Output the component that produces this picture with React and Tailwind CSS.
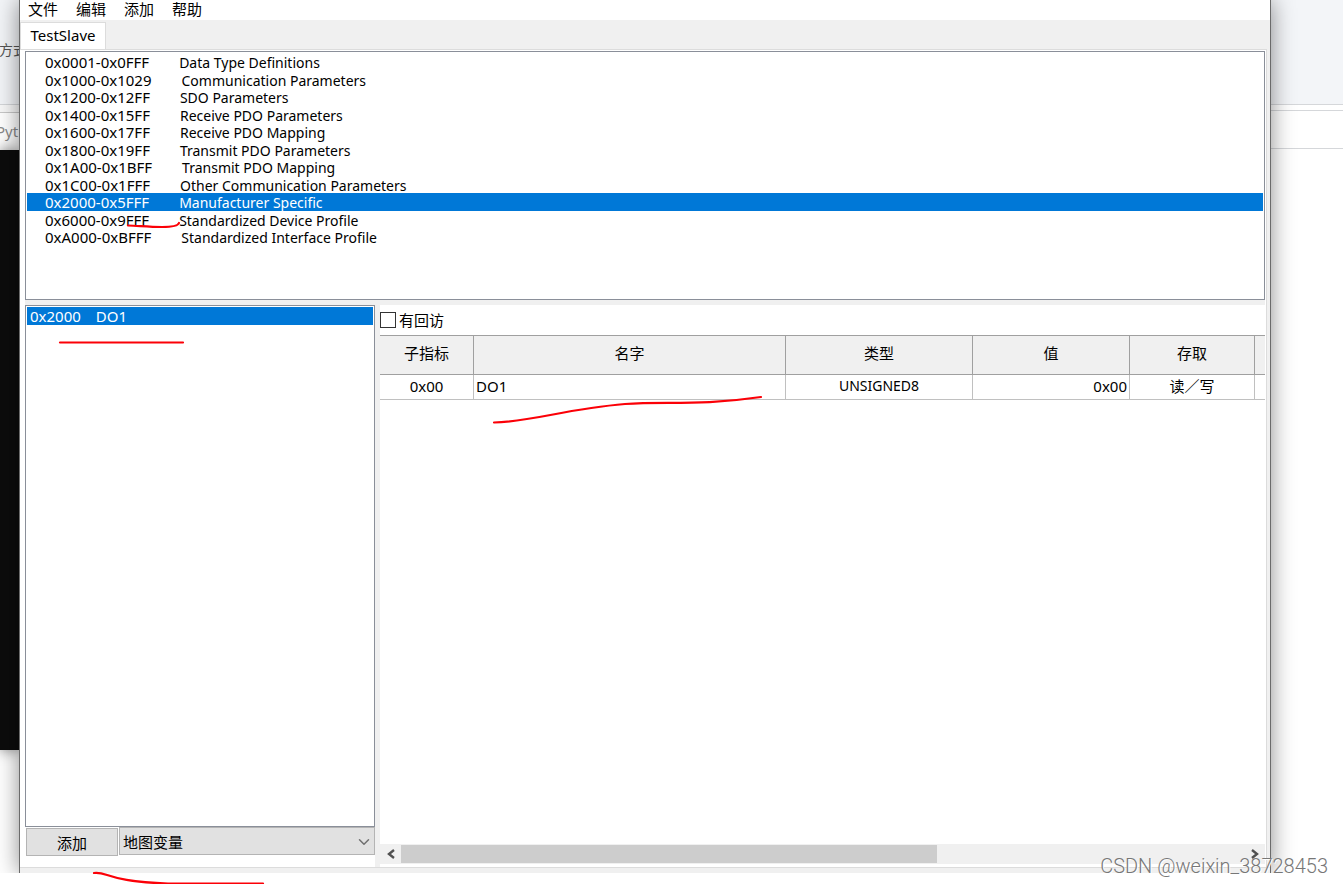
import React, { useState } from "react";
import { ChevronDown } from "lucide-react";

const menus = ["文件", "编辑", "添加", "帮助"];

const ranges = [
  { range: "0x0001-0x0FFF", name: "Data Type Definitions" },
  { range: "0x1000-0x1029", name: "Communication Parameters" },
  { range: "0x1200-0x12FF", name: "SDO Parameters" },
  { range: "0x1400-0x15FF", name: "Receive PDO Parameters" },
  { range: "0x1600-0x17FF", name: "Receive PDO Mapping" },
  { range: "0x1800-0x19FF", name: "Transmit PDO Parameters" },
  { range: "0x1A00-0x1BFF", name: "Transmit PDO Mapping" },
  { range: "0x1C00-0x1FFF", name: "Other Communication Parameters" },
  { range: "0x2000-0x5FFF", name: "Manufacturer Specific" },
  { range: "0x6000-0x9FFF", name: "Standardized Device Profile" },
  { range: "0xA000-0xBFFF", name: "Standardized Interface Profile" },
];

const headers = ["子指标", "名字", "类型", "值", "存取", ""];

// Strip of the windows behind, left of the editor
const LeftBackdrop = () => (
  <div className="flex w-[19px] shrink-0 flex-col overflow-hidden whitespace-nowrap bg-white">
    <div className="h-[105px] border-b border-[#d3d5d8] bg-[#f3f5f8] pt-10 text-[14px] leading-[20px] text-[#555]">
      <span className="-ml-px">方式</span>
    </div>
    <div className="h-2 border-b border-[#c8c8c8] bg-[#f8f8f8]"></div>
    <div className="h-[37px] pt-2 text-[15px] leading-[20px] text-[#8a8a8a]">
      <span className="-ml-1">Pyt</span>
    </div>
    <div className="h-[600px] bg-[#0c0c0c] shadow-[0_0_14px_rgba(0,0,0,0.5)]"></div>
  </div>
);

// Strip of the windows behind, right of the editor
const RightBackdrop = () => (
  <div className="w-[72px] shrink-0 bg-white">
    <div className="h-[105px] border-b border-[#d5d7da] bg-[#f3f5f8]"></div>
    <div className="h-1.5 border-b border-[#d5d7da]"></div>
    <div className="h-[38px] border-b border-[#d5d7da]"></div>
  </div>
);

const RangeList = () => {
  const [selected, setSelected] = useState(8);

  return (
    <div className="h-[249px] shrink-0 border border-[#8a8f99] bg-white p-px">
      <ul className="flex h-[193px] flex-col">
        {ranges.map((item, i) => (
          <li key={item.range} className="flex min-h-0 flex-1">
            <button
              onClick={() => setSelected(i)}
              className={
                i === selected
                  ? "flex w-full items-baseline gap-[30px] bg-[#0078d7] pl-[18px] text-white"
                  : "flex w-full items-baseline gap-[30px] pl-[18px]"
              }
            >
              <span>{item.range}</span>
              <span className="text-[14px]">{item.name}</span>
            </button>
          </li>
        ))}
      </ul>
    </div>
  );
};

const IndexPanel = () => (
  <div className="flex w-[350px] shrink-0 flex-col">
    <ul className="flex-1 border border-[#8a8f99] bg-white p-px">
      <li>
        <button className="flex h-[18px] w-full items-center gap-[15px] bg-[#0078d7] pl-[3px] text-white">
          <span>0x2000</span>
          <span>DO1</span>
        </button>
      </li>
    </ul>
    <div className="flex h-10 items-start gap-px bg-white pl-px">
      <button className="mt-px h-7 w-[92px] border border-[#b4b4b4] bg-[#e1e1e1] pt-0.5">
        添加
      </button>
      <div className="relative flex-1">
        <select
          aria-label="类型"
          className="block h-7 w-full appearance-none border border-[#b4b4b4] bg-[#e1e1e1] px-[3px] pt-0.5 leading-[18px]"
        >
          <option>地图变量</option>
        </select>
        <ChevronDown
          className="pointer-events-none absolute right-0.5 top-1.5 h-[18px] w-[18px] text-[#707070]"
          strokeWidth={2}
        />
      </div>
    </div>
  </div>
);

const ScrollBar = () => (
  <div className="flex h-5 shrink-0 items-center bg-[#f0f0f0]">
    <button aria-label="left" className="flex w-[21px] justify-center">
      <svg width="8" height="10" viewBox="0 0 8 10" fill="none" stroke="#505050" strokeWidth="2.4">
        <path d="M7 1 L2 5 L7 9" />
      </svg>
    </button>
    <div className="flex h-[18px] flex-1">
      <div className="w-7/11 bg-[#cdcdcd]"></div>
    </div>
    <button aria-label="right" className="flex w-[21px] justify-center">
      <svg width="8" height="10" viewBox="0 0 8 10" fill="none" stroke="#505050" strokeWidth="2.4">
        <path d="M1 1 L6 5 L1 9" />
      </svg>
    </button>
  </div>
);

const SubIndexPanel = () => (
  <div className="mb-[3px] flex min-w-0 flex-1 flex-col bg-white">
    <label className="flex h-[30px] shrink-0 items-center gap-[3px]">
      <input
        type="checkbox"
        className="h-4 w-4 appearance-none border border-[#333] bg-white checked:bg-[#0078d7]"
      />
      有回访
    </label>
    <table className="w-full table-fixed border-separate border-spacing-0">
      <colgroup>
        <col className="w-[94px]" />
        <col />
        <col className="w-[187px]" />
        <col className="w-[157px]" />
        <col className="w-[125px]" />
        <col className="w-[10px]" />
      </colgroup>
      <thead>
        <tr>
          {headers.map((h, i) => (
            <th
              key={i}
              className="h-10 border-y border-r border-y-[#a0a0a0] border-r-[#a0a0a0] bg-[#f0f0f0] p-0 pb-1 font-normal last:border-r-0"
            >
              {h}
            </th>
          ))}
        </tr>
      </thead>
      <tbody>
        <tr className="[&>td]:h-[25px] [&>td]:border-b [&>td]:border-r [&>td]:border-[#c0c0c0] [&>td]:pb-0.5">
          <td className="text-center">0x00</td>
          <td className="px-0.5">DO1</td>
          <td className="text-center text-[14px]">UNSIGNED8</td>
          <td className="px-0.5 text-right">0x00</td>
          <td className="text-center">读／写</td>
          <td className="border-r-0!"></td>
        </tr>
      </tbody>
    </table>
    <div className="flex-1"></div>
    <ScrollBar />
  </div>
);

// Hand-drawn red underlines over the window
const Marks = () => (
  <svg
    className="pointer-events-none absolute left-0 top-0 z-20"
    width="1343"
    height="884"
    fill="none"
    stroke="#fb0007"
    strokeWidth="2.2"
    strokeLinecap="round"
  >
    <path d="M128 225.500 C140 226 150 227 162 227 C172 227 178 226 179 223" />
    <path d="M60 342.500 H183" />
    <path d="M494 422.500 C530 422 565 409 625 404 C665 401 700 406 761 397" />
    <path d="M94 873 C107 871 108 882 168 883.500 H263" />
  </svg>
);

export default function App() {
  return (
    <div className="relative flex min-h-screen flex-col overflow-hidden bg-white font-['Noto_Sans','Noto_Sans_CJK_SC',sans-serif] text-[15px] leading-[18px] text-black">
      <div className="flex flex-1 overflow-hidden">
        <LeftBackdrop />
        <div className="relative z-10 flex min-w-0 flex-1 flex-col border-x border-[#6b6b6b] bg-[#f0f0f0] shadow-[0_0_22px_rgba(0,0,0,0.45)]">
          <nav className="flex h-5 shrink-0 items-start gap-[18px] bg-white pl-2">
            {menus.map((m) => (
              <button key={m}>{m}</button>
            ))}
          </nav>
          <div className="flex h-[29px] shrink-0 items-end">
            <button className="h-[27px] w-[86px] border border-b-0 border-[#dcdcdc] bg-white pb-0.5">
              TestSlave
            </button>
          </div>
          <div className="mr-[3px] flex flex-1 flex-col border-r border-t border-[#dcdcdc] bg-white pl-[5px] pt-px">
            <div className="mr-px flex flex-1 flex-col">
              <RangeList />
              <div className="h-[5px] shrink-0 bg-[#f0f0f0]"></div>
              <div className="flex flex-1">
                <IndexPanel />
                <div className="w-[5px] shrink-0 bg-[#f0f0f0]"></div>
                <SubIndexPanel />
              </div>
            </div>
          </div>
          <div className="h-[6px] shrink-0 border-t border-[#dcdcdc]"></div>
        </div>
        <RightBackdrop />
      </div>
      <div className="h-[11px] shrink-0 bg-white"></div>
      <Marks />
      <p className="absolute bottom-2 right-[15px] z-30 font-[Roboto,sans-serif] text-[20px] font-light leading-[20px] text-[#777] [text-shadow:1px_1px_0_#fff]">
        CSDN @weixin_38728453
      </p>
    </div>
  );
}
